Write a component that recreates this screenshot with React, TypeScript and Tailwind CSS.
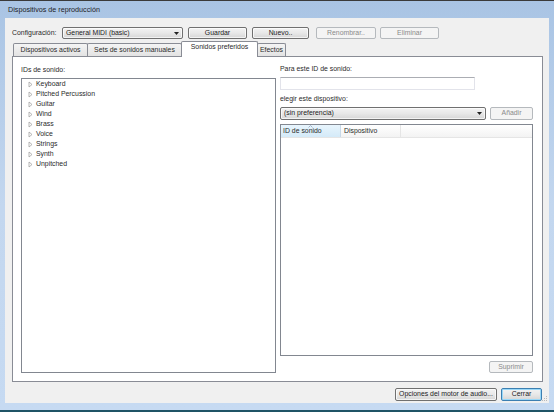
import React from "react";

const sounds = [
  "Keyboard",
  "Pitched Percussion",
  "Guitar",
  "Wind",
  "Brass",
  "Voice",
  "Strings",
  "Synth",
  "Unpitched",
];

const face =
  "rounded-[2px] border border-[#707070] bg-gradient-to-b from-[#f3f3f3] via-[#e8e8e8] to-[#d6d6d6] shadow-[inset_0_0_0_1px_rgba(255,255,255,0.7)] text-[#222]";
const btn = `flex items-center justify-center ${face}`;
const combo = `flex items-center justify-between px-[3px] ${face}`;
const btnOff =
  "flex items-center justify-center rounded-[2px] border border-[#b5b9bd] bg-[#f4f4f4] text-[#8a8a8a]";

function ComboArrow() {
  return (
    <svg width="5" height="3" viewBox="0 0 5 3" className="shrink-0">
      <polygon points="0,0 5,0 2.5,3" fill="#222" />
    </svg>
  );
}

function TreeArrow() {
  return (
    <svg width="5" height="7" viewBox="0 0 5 7" className="shrink-0">
      <polygon
        points="1,1 4,3.5 1,6"
        fill="none"
        stroke="#9a9a9a"
        strokeWidth="0.7"
      />
    </svg>
  );
}

function Tab({ label, width, active }: { label: string; width: string; active?: boolean }) {
  if (active) {
    return (
      <div
        className={`${width} relative z-10 -mb-px -ml-px flex h-[16px] items-start justify-center rounded-t-[2px] border border-b-0 border-[#898c95] bg-white pt-[2px]`}
      >
        {label}
      </div>
    );
  }
  return (
    <div
      className={`${width} -ml-px flex h-[13px] items-center justify-center rounded-t-[2px] border border-b-0 border-[#898c95] bg-gradient-to-b from-[#f4f4f4] to-[#e3e3e3] first:ml-0`}
    >
      {label}
    </div>
  );
}

export default function App() {
  return (
    <div className="relative flex h-[412px] w-[554px] flex-col overflow-hidden border-t border-b-2 border-t-[#3a3a3a] border-b-[#1f5466] bg-gradient-to-b from-[#a9c4e4] via-[#c3d7ef] to-[#c6daf2] font-['Liberation_Sans',Arial,sans-serif] text-[6.9px] leading-none text-[#2a2a2a]">
      {/* title bar */}
      <div className="flex h-[17px] items-center pl-[8px] text-[7.2px] text-[#1e1e1e]">
        Dispositivos de reproducción
      </div>

      {/* client */}
      <div className="relative mx-[5px] flex h-[385px] flex-col bg-[#f0f0f0]">
        {/* configuración row */}
        <div className="mt-[9px] flex h-[12px] items-stretch pl-[7px]">
          <div className="flex w-[50px] items-center">Configuración:</div>
          <div className={`${combo} w-[121px]`}>
            <span>General MIDI (basic)</span>
            <ComboArrow />
          </div>
          <div className={`${btn} ml-[5px] w-[59px]`}>Guardar</div>
          <div className={`${btn} ml-[5px] w-[57px]`}>Nuevo..</div>
          <div className={`${btnOff} ml-[7px] w-[60px]`}>Renombrar..</div>
          <div className={`${btnOff} ml-[4px] w-[59px]`}>Eliminar</div>
        </div>

        {/* tabs */}
        <div className="mt-[2px] flex h-[15px] items-end pl-[8px]">
          <Tab label="Dispositivos activos" width="w-[75px]" />
          <Tab label="Sets de sonidos manuales" width="w-[95px]" />
          <Tab label="Sonidos preferidos" width="w-[77px]" active />
          <Tab label="Efectos" width="w-[29px]" />
        </div>

        {/* panel */}
        <div className="ml-[7px] mr-[6px] flex h-[326px] border border-[#898c95] bg-white pb-[8px] pl-[8px] pr-[9px]">
          {/* left */}
          <div className="flex w-[255px] flex-col pt-[8px]">
            <div className="h-[9px] leading-[9px]">IDs de sonido:</div>
            <div className="mt-[4px] flex-1 border border-[#828790] pl-[6px]">
              {sounds.map((s) => (
                <div key={s} className="flex h-[10px] items-center">
                  <TreeArrow />
                  <span className="ml-[3px]">{s}</span>
                </div>
              ))}
            </div>
          </div>

          {/* right */}
          <div className="ml-[4px] flex flex-1 flex-col pt-[7px]">
            <div className="h-[9px] leading-[9px]">Para este ID de sonido:</div>
            <div className="mt-[4px] h-[13px] w-[195px] border border-[#e2e3ea] border-t-[#abadb3] bg-white" />
            <div className="mt-[4px] h-[9px] leading-[9px]">elegir este dispositivo:</div>
            <div className="mt-[4px] flex h-[13px]">
              <div className={`${combo} w-[206px]`}>
                <span>(sin preferencia)</span>
                <ComboArrow />
              </div>
              <div className={`${btnOff} ml-[4px] flex-1`}>Añadir</div>
            </div>
            <div className="mt-[4px] flex flex-1 flex-col border border-[#828790]">
              <div className="flex h-[13px] border-b border-[#e5e5e5]">
                <div className="relative flex w-[60px] items-center border-r border-[#c8d9e8] bg-gradient-to-b from-[#e8f5fd] to-[#d4eaf8] pl-[2px]">
                  <svg
                    width="5"
                    height="3"
                    viewBox="0 0 5 3"
                    className="absolute left-[27px] top-0"
                  >
                    <polyline points="0.5,2.5 2.5,0.5 4.5,2.5" fill="none" stroke="#8ea4bd" strokeWidth="0.8" />
                  </svg>
                  ID de sonido
                </div>
                <div className="flex w-[60px] items-center border-r border-[#e5e5e5] bg-gradient-to-b from-white to-[#f3f3f3] pl-[3px]">
                  Dispositivo
                </div>
                <div className="flex-1 bg-gradient-to-b from-white to-[#f3f3f3]" />
              </div>
              <div className="flex-1" />
            </div>
            <div className="mt-[5px] flex h-[12px] justify-end">
              <div className={`${btnOff} w-[44px]`}>Suprimir</div>
            </div>
          </div>
        </div>

        {/* bottom buttons */}
        <div className="mt-[6px] flex h-[13px] justify-end gap-[4px] pr-[7px]">
          <div className={`${btn} w-[102px]`}>Opciones del motor de audio...</div>
          <div className="flex w-[41px] items-center justify-center rounded-[2px] border border-[#3c7fb1] bg-gradient-to-b from-[#f3f3f3] via-[#e8e8e8] to-[#d6d6d6] text-[#222] shadow-[inset_0_0_0_1px_#9ad8f8]">
            Cerrar
          </div>
        </div>

        {/* size grip */}
        <svg width="6" height="6" viewBox="0 0 6 6" className="absolute bottom-[1px] right-[1px]">
          <rect x="4" y="0" width="1" height="1" fill="#b8b8b8" />
          <rect x="4" y="2" width="1" height="1" fill="#b8b8b8" />
          <rect x="2" y="2" width="1" height="1" fill="#b8b8b8" />
          <rect x="4" y="4" width="1" height="1" fill="#b8b8b8" />
          <rect x="2" y="4" width="1" height="1" fill="#b8b8b8" />
          <rect x="0" y="4" width="1" height="1" fill="#b8b8b8" />
        </svg>
      </div>
    </div>
  );
}
